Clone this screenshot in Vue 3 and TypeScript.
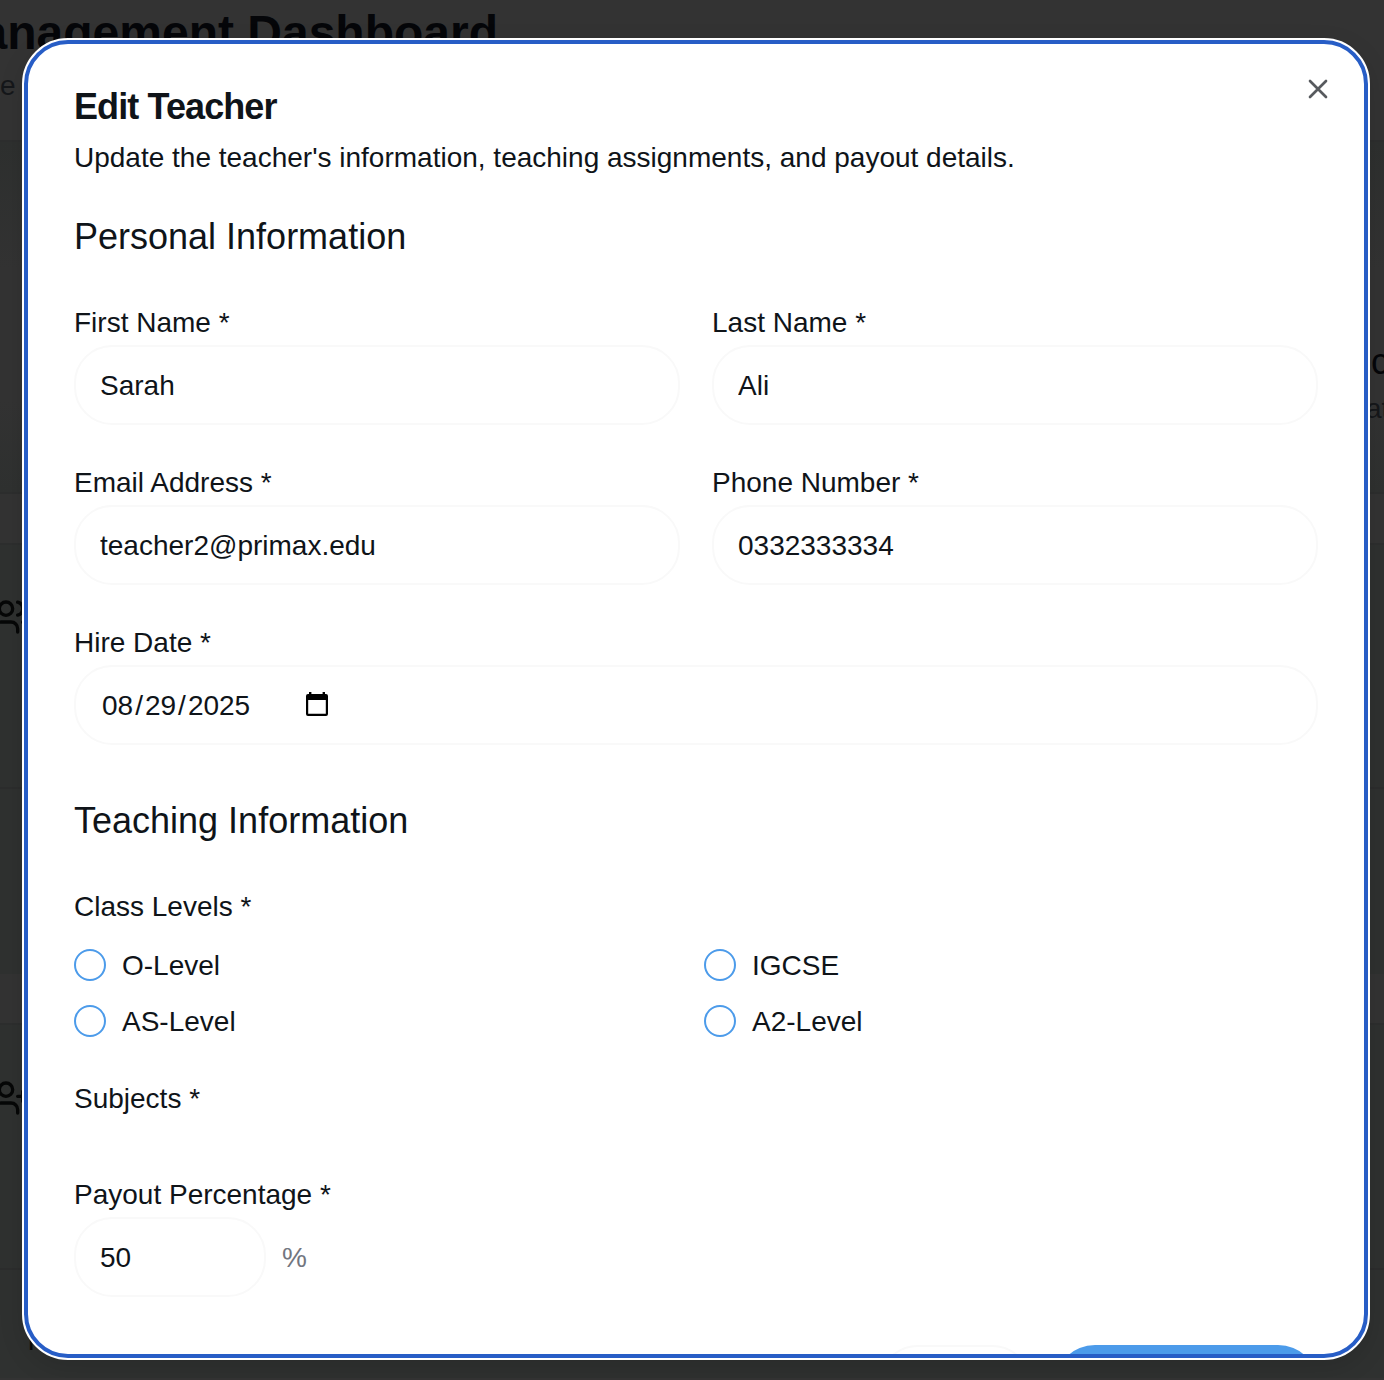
<script setup lang="ts">
import { ref } from 'vue'

const levels: string[] = ['O-Level', 'IGCSE', 'AS-Level', 'A2-Level']
const first = ref('Sarah')
const last = ref('Ali')
const email = ref('teacher2@primax.edu')
const phone = ref('0332333334')
const payout = ref('50')
</script>

<template>
  <div class="page">
    <div class="backdrop">
      <div class="band band-a"></div>
      <div class="band band-b"></div>
      <div class="band band-c"></div>
      <div class="band band-d"></div>
      <div class="rule rule-a"></div>
      <div class="rule rule-b"></div>
      <h1 class="bg-title">Management Dashboard</h1>
      <p class="bg-sub">e</p>
      <span class="bg-c">c</span>
      <span class="bg-at">at</span>
      <span class="bg-foot">r</span>
      <svg class="bg-icon users" width="40" height="40" viewBox="0 0 24 24"><path d="M16 21v-2a4 4 0 0 0-4-4H6a4 4 0 0 0-4 4v2M22 21v-2a4 4 0 0 0-3-3.87M16 3.13a4 4 0 0 1 0 7.75" /><circle cx="9" cy="7" r="4" /></svg>
      <svg class="bg-icon user-plus" width="40" height="40" viewBox="0 0 24 24"><path d="M16 21v-2a4 4 0 0 0-4-4H6a4 4 0 0 0-4 4v2M19 8v6M22 11h-6" /><circle cx="9" cy="7" r="4" /></svg>
    </div>

    <div class="modal" role="dialog">
      <div class="body">
        <h2 class="title">Edit Teacher</h2>
        <p class="desc">Update the teacher's information, teaching assignments, and payout details.</p>

        <h3 class="section">Personal Information</h3>
        <div class="grid">
          <div class="field"><label>First Name *</label><input v-model="first" /></div>
          <div class="field"><label>Last Name *</label><input v-model="last" /></div>
          <div class="field"><label>Email Address *</label><input v-model="email" /></div>
          <div class="field"><label>Phone Number *</label><input v-model="phone" /></div>
          <div class="field wide">
            <label>Hire Date *</label>
            <div class="date">
              <span class="date-text"><span>08</span><i>/</i><span>29</span><i>/</i><span>2025</span></span>
              <svg width="24" height="26" viewBox="0 0 24 26"><path fill-rule="evenodd" d="M4 1h2.4v2h11.2V1H20v2h1a2 2 0 0 1 2 2v18a2 2 0 0 1-2 2H3a2 2 0 0 1-2-2V5a2 2 0 0 1 2-2h1zM3.2 9v13.8h17.6V9z" /></svg>
            </div>
          </div>
        </div>

        <h3 class="section teaching">Teaching Information</h3>
        <div class="group">Class Levels *</div>
        <div class="levels">
          <div v-for="l in levels" :key="l" class="level"><span class="circle"></span><span class="level-name">{{ l }}</span></div>
        </div>
        <div class="group subjects">Subjects *</div>
        <div class="field payout">
          <label>Payout Percentage *</label>
          <div class="percent"><input v-model="payout" /><span>%</span></div>
        </div>
        <div class="actions">
          <button class="cancel"></button>
          <button class="save"></button>
        </div>
      </div>
      <svg class="close" width="32" height="32" viewBox="0 0 24 24"><path d="M18 6 6 18M6 6l12 12" /></svg>
    </div>
  </div>
</template>

<style>
html,
body {
  margin: 0;
  overflow: hidden;
}
</style>

<style scoped>
.page {
  position: relative;
  width: 1384px;
  height: 1380px;
  overflow: hidden;
  background: #333;
  font-family: "Liberation Sans", Arial, sans-serif;
  font-size: 28px;
  color: #0f1419;
}
.page * {
  box-sizing: border-box;
}
.backdrop > * {
  position: absolute;
  margin: 0;
  white-space: nowrap;
}
.band {
  left: 0;
  right: 0;
  background: #2f3130;
  border-top: 2px solid #2d2e2e;
}
.band-a { top: 140px; height: 130px; background: linear-gradient(#2e302f, #333); }
.band-b { top: 400px; height: 94px; background: linear-gradient(#333, #2f3130); border-top: 0; border-bottom: 2px solid #2d2e2e; }
.band-c { top: 543px; height: 431px; }
.band-d { top: 1023px; height: 355px; }
.rule {
  left: 0;
  right: 0;
  height: 2px;
  background: #2c2d2d;
}
.rule-a { top: 787px; }
.rule-b { top: 1268px; }
.bg-title {
  right: 886px;
  top: 5px;
  font-size: 48px;
  line-height: 56px;
  font-weight: 700;
  color: #050609;
}
.bg-sub { left: 0; top: 70px; line-height: 32px; color: #15171a; }
.bg-c { left: 1371px; top: 342px; font-size: 36px; line-height: 40px; color: #050609; }
.bg-at { left: 1366px; top: 393px; line-height: 32px; color: #15171a; }
.bg-foot { left: 28px; top: 1325px; line-height: 32px; color: #080a09; }
.bg-icon {
  fill: none;
  stroke: #060707;
  stroke-width: 2;
  stroke-linecap: round;
  stroke-linejoin: round;
}
.users { left: -9px; top: 597px; }
.user-plus { left: -9px; top: 1078px; }

.modal {
  position: absolute;
  left: 22px;
  top: 38px;
  width: 1348px;
  height: 1322px;
  border-radius: 46px;
  background: #fff;
  border: 2px solid #fff;
  box-shadow: 0 8px 24px rgba(0, 0, 0, 0.12);
}
.body {
  height: 100%;
  overflow: hidden;
  border: 4px solid #275dc6;
  border-radius: 44px;
  padding: 41px 46px 0;
}
.title {
  margin: 0;
  font-size: 36px;
  line-height: 44px;
  letter-spacing: -0.9px;
}
.desc {
  margin: 9px 0 0;
  line-height: 40px;
  white-space: nowrap;
}
.section {
  margin: 31px 0 0;
  font-size: 36px;
  font-weight: 400;
  line-height: 56px;
}
.grid {
  display: grid;
  grid-template-columns: 1fr 1fr;
  gap: 40px 32px;
  margin-top: 40px;
}
.field {
  display: flex;
  flex-direction: column;
  height: 120px;
}
.wide {
  grid-column: 1 / -1;
}
label {
  display: block;
  line-height: 36px;
  margin-bottom: 4px;
}
input,
.date {
  width: 100%;
  height: 80px;
  border: 2px solid #f9f9f9;
  border-radius: 38px;
  background: #fff;
  padding: 2px 24px 0;
  font: inherit;
  color: inherit;
  outline: none;
}
.date {
  display: flex;
  align-items: center;
  padding-left: 26px;
}
.date svg {
  margin-bottom: 4px;
}
.date-text {
  width: 203px;
}
.date i {
  font-style: normal;
  padding: 0 2px;
}
.section.teaching {
  margin-top: 48px;
}
.group {
  margin-top: 38px;
  line-height: 40px;
}
.levels {
  display: grid;
  grid-template-columns: 1fr 1fr;
  gap: 16px;
  margin-top: 18px;
}
.level {
  display: flex;
  align-items: center;
  height: 40px;
  gap: 16px;
}
.level-name {
  padding-top: 2px;
}
.circle {
  width: 32px;
  height: 32px;
  border: 2px solid #4c9bea;
  border-radius: 50%;
}
.payout {
  margin-top: 58px;
}
.percent {
  display: flex;
  align-items: center;
  gap: 16px;
  color: #72767f;
}
.percent input {
  width: 192px;
  color: #0f1419;
}
.percent span {
  padding-top: 2px;
}
.actions {
  display: flex;
  justify-content: flex-end;
  gap: 23px;
  margin-top: 48px;
}
button {
  height: 80px;
  border-radius: 40px;
  padding: 0;
}
.cancel {
  width: 154px;
  border: 2px solid #f9f9f9;
  background: #fff;
}
.save {
  width: 263px;
  border: 0;
  background: #4c9bea;
}
.close {
  position: absolute;
  right: 34px;
  top: 33px;
  fill: none;
  stroke: #575a5e;
  stroke-width: 2;
  stroke-linecap: round;
}
</style>
